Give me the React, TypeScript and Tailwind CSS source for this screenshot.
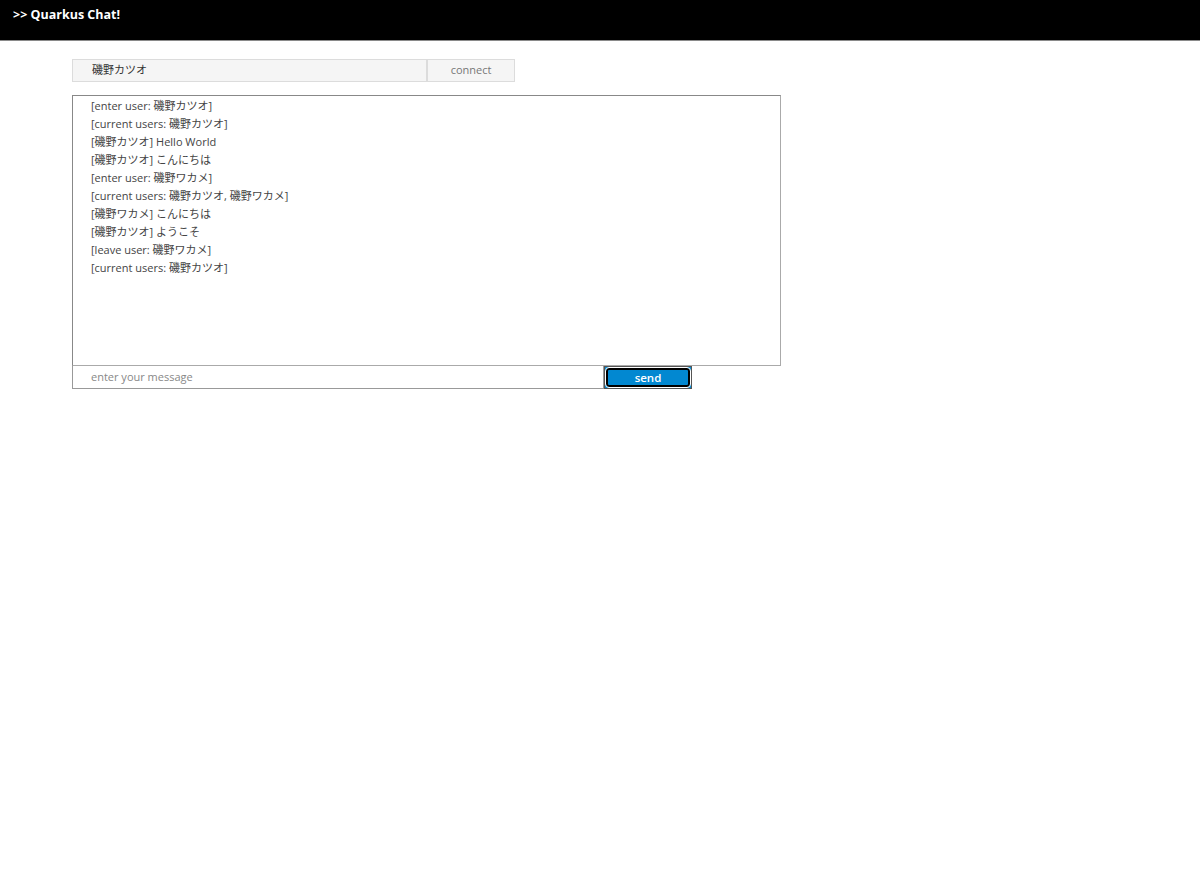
const messages = [
  '[enter user: 磯野カツオ]',
  '[current users: 磯野カツオ]',
  '[磯野カツオ] Hello World',
  '[磯野カツオ] こんにちは',
  '[enter user: 磯野ワカメ]',
  '[current users: 磯野カツオ, 磯野ワカメ]',
  '[磯野ワカメ] こんにちは',
  '[磯野カツオ] ようこそ',
  '[leave user: 磯野ワカメ]',
  '[current users: 磯野カツオ]',
]

export default function App() {
  return (
    <div
      className="min-h-[870px] bg-white text-[#333]"
      style={{ fontFamily: '"Open Sans", "Noto Sans CJK JP", sans-serif' }}
    >
      <header className="h-[41px] bg-black border-b border-[#8a8a8a] flex items-center pl-[13px]">
        <span className="text-white font-bold text-[12.5px] -mt-[10px]">&gt;&gt; Quarkus Chat!</span>
      </header>

      <div className="pl-[72px] pt-[18px]">
        <div className="flex">
          <div className="w-[355px] h-[23px] bg-[#f5f5f5] border border-[#dcdcdc] flex items-center pl-[19px] text-[11px] text-[#333]">
            磯野カツオ
          </div>
          <button className="w-[88px] h-[23px] bg-[#f5f5f5] border border-[#dcdcdc] text-[11px] text-[#777] flex items-center justify-center">
            connect
          </button>
        </div>

        <div className="mt-[13px] w-[709px] h-[271px] border border-[#888] border-r-[#aaa] border-b-[#aaa] pl-[18px] pt-[1px] text-[11px] leading-[18px] text-[#444]">
          {messages.map((m, i) => (
            <div key={i}>{m}</div>
          ))}
        </div>

        <div className="flex">
          <div className="w-[532px] h-[23px] border border-[#999] border-t-0 flex items-center pl-[18px] text-[11px] text-[#888]">
            enter your message
          </div>
          <div className="w-[88px] h-[23px] bg-[#0288d1] border border-[#555] p-[1px]">
            <button className="w-full h-full bg-[#0288d1] border-2 border-black rounded-[3px] outline outline-1 outline-white text-white text-[11.5px] font-semibold flex items-center justify-center">
              send
            </button>
          </div>
        </div>
      </div>
    </div>
  )
}
